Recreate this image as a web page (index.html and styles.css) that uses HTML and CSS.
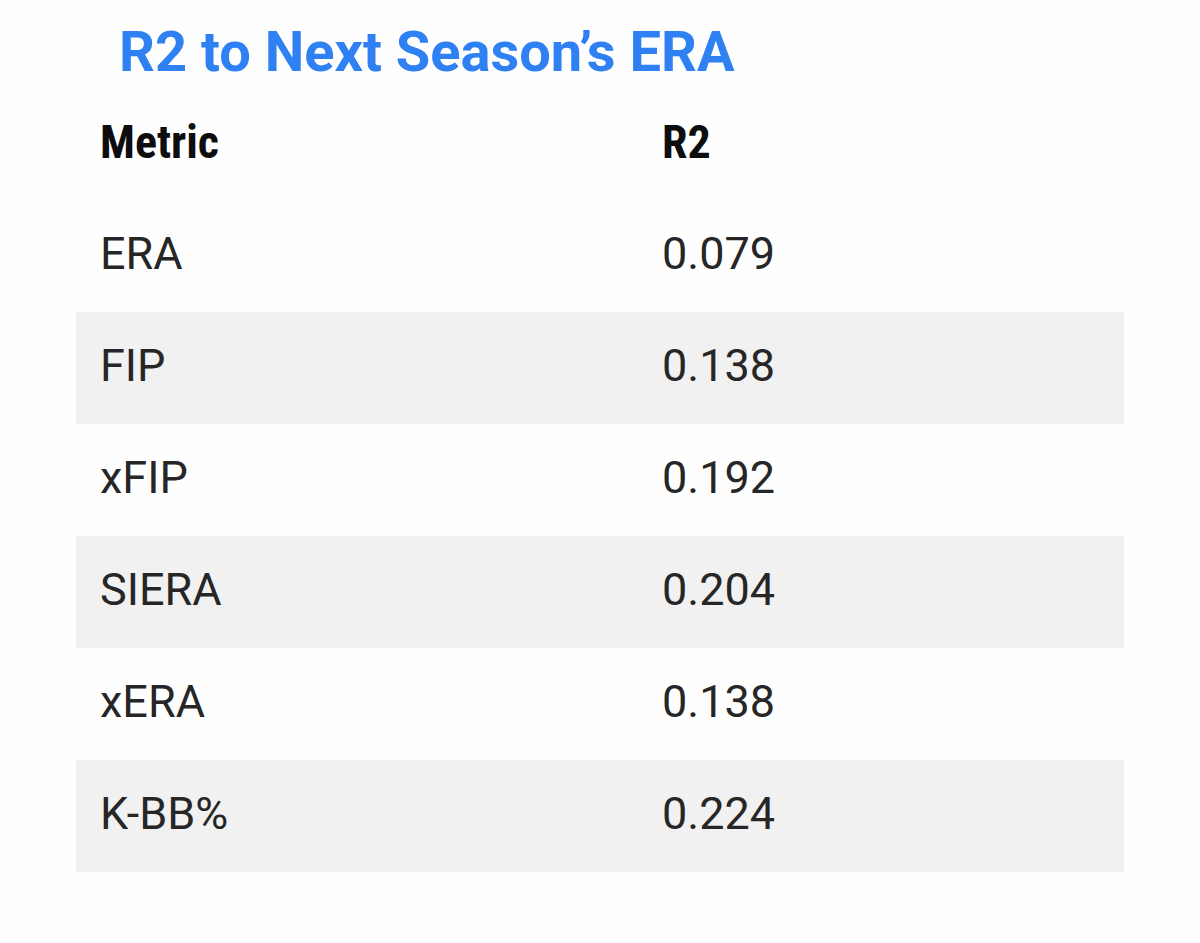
FILE: index.html
```html
<!DOCTYPE html>
<html>
<head>
<meta charset="utf-8">
<link rel="stylesheet" href="styles.css">
</head>
<body>
<div class="page">
  <h1 class="title">R2 to Next Season’s ERA</h1>
  <div class="table">
    <div class="row head"><div class="cell">Metric</div><div class="cell">R2</div></div>
    <div class="row"><div class="cell">ERA</div><div class="cell">0.079</div></div>
    <div class="row alt"><div class="cell">FIP</div><div class="cell">0.138</div></div>
    <div class="row"><div class="cell">xFIP</div><div class="cell">0.192</div></div>
    <div class="row alt"><div class="cell">SIERA</div><div class="cell">0.204</div></div>
    <div class="row"><div class="cell">xERA</div><div class="cell">0.138</div></div>
    <div class="row alt"><div class="cell">K-BB%</div><div class="cell">0.224</div></div>
  </div>
</div>
</body>
</html>
```

FILE: styles.css
```css
html, body {
  margin: 0;
  padding: 0;
  background: #fefefe;
}
.page {
  width: 1200px;
  height: 943px;
  font-family: Roboto, "Noto Sans", sans-serif;
}
.title {
  margin: 0;
  padding: 20px 0 0 119px;
  height: 88px;
  box-sizing: border-box;
  font-size: 56px;
  line-height: 64px;
  font-weight: 700;
  color: #2f80f3;
  letter-spacing: 0;
}
.table {
  margin-left: 76px;
  width: 1048px;
}
.row {
  display: grid;
  grid-template-columns: 562px 1fr;
  height: 112px;
  align-items: center;
}
.row.alt {
  background: #f1f1f1;
}
.cell {
  padding-left: 24px;
  padding-bottom: 4px;
  font-size: 45px;
  line-height: 52px;
  color: #262626;
}
.head .cell {
  font-family: "Roboto Condensed", Roboto, sans-serif;
  font-stretch: 75%;
  font-weight: 700;
  font-size: 46px;
  color: #0d0d0d;
}
```
